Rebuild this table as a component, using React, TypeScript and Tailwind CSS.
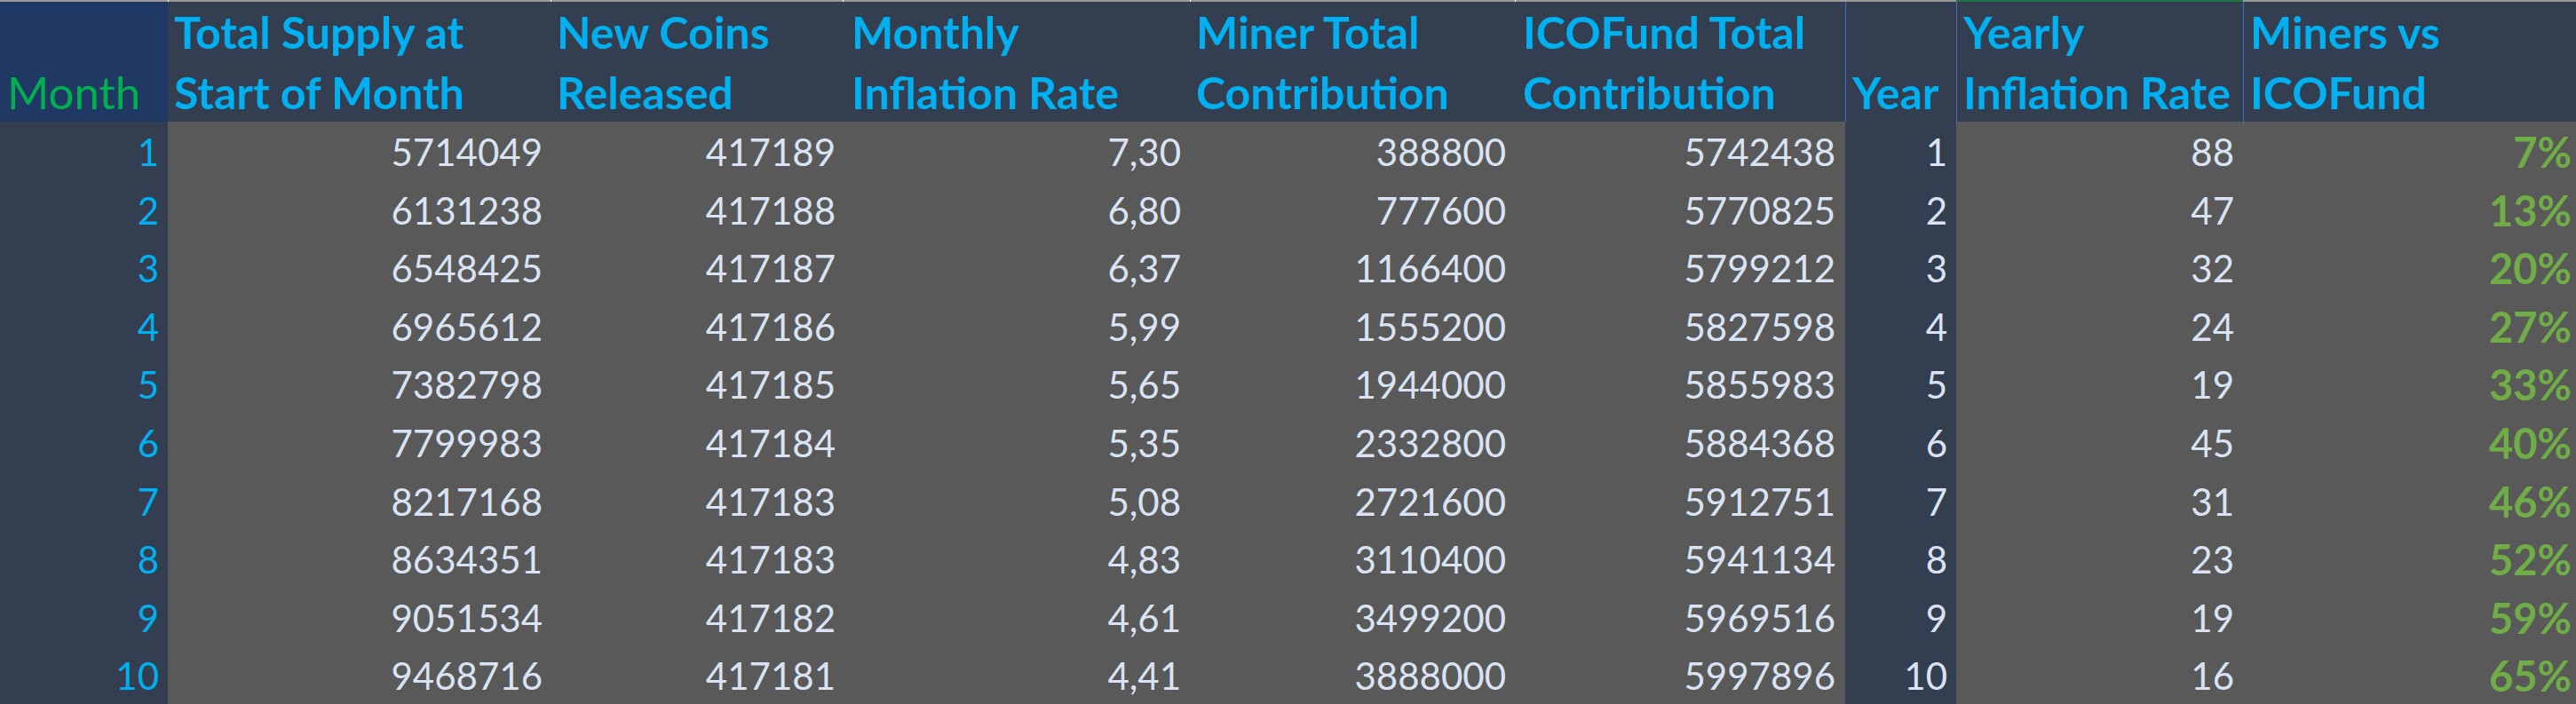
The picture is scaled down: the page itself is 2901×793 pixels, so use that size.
const rows = [
  [1, 5714049, 417189, '7,30', 388800, 5742438, 1, 88, '7%'],
  [2, 6131238, 417188, '6,80', 777600, 5770825, 2, 47, '13%'],
  [3, 6548425, 417187, '6,37', 1166400, 5799212, 3, 32, '20%'],
  [4, 6965612, 417186, '5,99', 1555200, 5827598, 4, 24, '27%'],
  [5, 7382798, 417185, '5,65', 1944000, 5855983, 5, 19, '33%'],
  [6, 7799983, 417184, '5,35', 2332800, 5884368, 6, 45, '40%'],
  [7, 8217168, 417183, '5,08', 2721600, 5912751, 7, 31, '46%'],
  [8, 8634351, 417183, '4,83', 3110400, 5941134, 8, 23, '52%'],
  [9, 9051534, 417182, '4,61', 3499200, 5969516, 9, 19, '59%'],
  [10, 9468716, 417181, '4,41', 3888000, 5997896, 10, 16, '65%'],
]

const grid = 'grid grid-cols-[189px_431px_329px_391px_366px_372px_125px_323px_375px]'

function Head({ lines, className = '' }: { lines: string[]; className?: string }) {
  return (
    <div className={`flex flex-col justify-end pl-[7px] pb-[2px] whitespace-nowrap font-bold text-[#00b0f0] text-[50px] leading-[68px] ${className}`}>
      {lines.map((l) => (
        <span key={l}>{l}</span>
      ))}
    </div>
  )
}

export default function App() {
  return (
    <div className="w-[2901px] h-[793px] overflow-hidden bg-[#595959] font-['Lato',sans-serif]">
      {/* strip of spreadsheet column edges */}
      <div className={`${grid} h-[2px] bg-[#9a9a9a]`}>
        <div />
        <div className="border-l border-white" />
        <div className="border-l border-white" />
        <div className="border-l border-white" />
        <div className="border-l border-white" />
        <div className="border-l border-white" />
        <div />
        <div className="bg-[#217346]" />
        <div />
      </div>

      <div className={`${grid} h-[135px] bg-[#333f50]`}>
        <div className="flex items-end pl-[8px] pb-[2px] bg-[#203864] text-[#00b050] text-[51px] leading-[68px]">
          Month
        </div>
        <Head lines={['Total Supply at', 'Start of Month']} />
        <Head lines={['New Coins', 'Released']} />
        <Head lines={['Monthly', 'Inflation Rate']} className="pl-[10px]" />
        <Head lines={['Miner Total', 'Contribution']} />
        <Head lines={['ICOFund Total', 'Contribution']} className="pl-[9px]" />
        <Head lines={['Year']} className="border-l border-[#4472c4]" />
        <Head lines={['Yearly', 'Inflation Rate']} className="border-l border-[#4472c4] pl-[6px]" />
        <Head lines={['Miners vs', 'ICOFund']} className="border-l border-[#4472c4]" />
      </div>

      {rows.map((r) => (
        <div key={r[0]} className={`${grid} h-[65.6px] text-[42px] leading-[65.6px] text-right text-[#dae3f3]`}>
          <div className="pr-[10px] pt-[2px] bg-[#333f50] text-[#00b0f0]">{r[0]}</div>
          <div className="pr-[9px] pt-[2px]">{r[1]}</div>
          <div className="pr-[8px] pt-[2px]">{r[2]}</div>
          <div className="pr-[10px] pt-[2px]">{r[3]}</div>
          <div className="pr-[10px] pt-[2px]">{r[4]}</div>
          <div className="pr-[11px] pt-[2px]">{r[5]}</div>
          <div className="pr-[10px] pt-[2px] bg-[#333f50]">{r[6]}</div>
          <div className="pr-[10px] pt-[2px]">{r[7]}</div>
          <div className="pr-[5px] pt-[2px] font-bold text-[47px] text-[#70ad47]">{r[8]}</div>
        </div>
      ))}
    </div>
  )
}
